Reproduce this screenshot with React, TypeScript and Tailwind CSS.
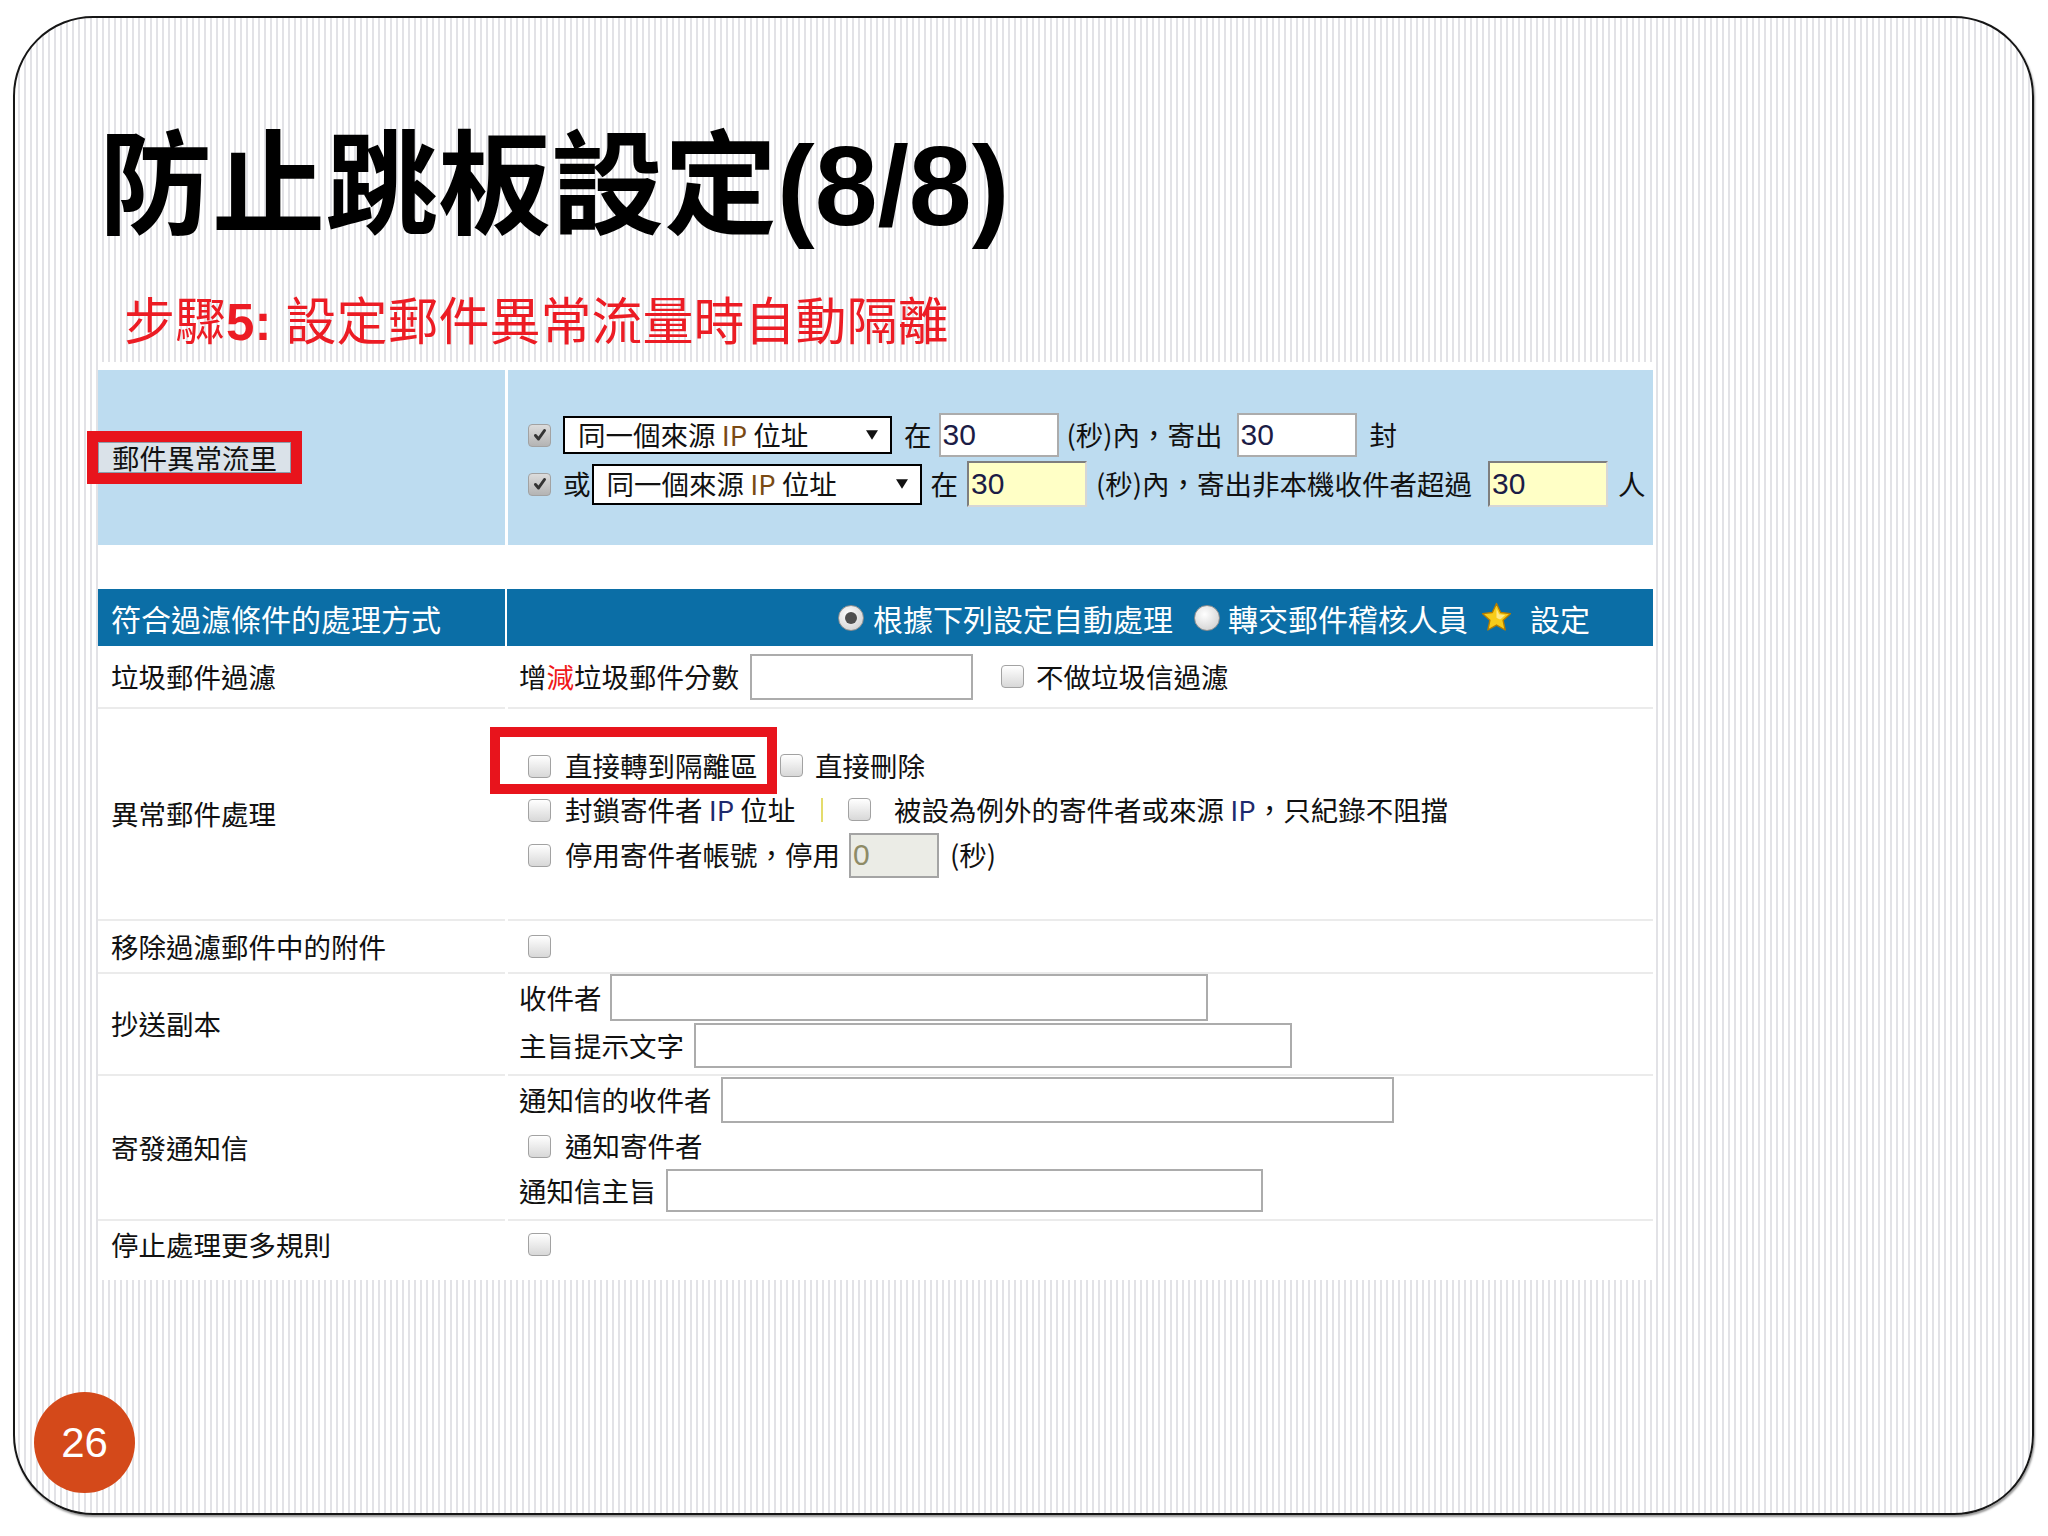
import type { ReactNode } from "react";

// Slide 26: anti-relay settings, step 5 (screenshot of the mail-filter form)

const formFont = "font-['Noto_Sans_CJK_TC','Noto_Sans_CJK_JP',sans-serif]";

function Check({ on = false }: { on?: boolean }) {
  return (
    <span
      className={
        "inline-flex h-[23px] w-[23px] shrink-0 items-center justify-center rounded-[4px] border border-[#a2a2a2] bg-linear-to-b " +
        (on ? "from-[#dcdcdc] to-[#b4b4b4]" : "from-[#ffffff] to-[#d8d8d8]")
      }
    >
      {on && (
        <svg viewBox="0 0 16 16" className="h-[16px] w-[16px]">
          <path
            d="M3.5 8.5 6.5 12 12.5 3.5"
            fill="none"
            stroke="#333333"
            strokeWidth="3"
            strokeLinecap="round"
            strokeLinejoin="round"
          />
        </svg>
      )}
    </span>
  );
}

function Field({
  className = "",
  value = "",
  kind = "white",
}: {
  className?: string;
  value?: string;
  kind?: "white" | "yellow" | "off";
}) {
  const skin =
    kind === "yellow"
      ? "border-2 border-t-[#7e7e7e] border-l-[#7e7e7e] border-r-[#d6d6d6] border-b-[#d6d6d6] bg-[#ffffc6] text-[#1c1c46]"
      : kind === "off"
        ? "border-2 border-[#a4a4a4] bg-[#ebece6] text-[#8e8b66]"
        : "border-2 border-[#acacac] bg-white text-[#1c1c46]";
  return (
    <span
      className={`flex shrink-0 items-center pl-[2px] font-['Liberation_Sans',sans-serif] text-[30px] leading-none ${skin} ${className}`}
    >
      {value}
    </span>
  );
}

function Select({ className = "" }: { className?: string }) {
  return (
    <span
      className={`flex shrink-0 items-center justify-between border-2 border-black bg-white pl-[13px] pr-[12px] ${className}`}
    >
      <span className="whitespace-nowrap">
        同一個來源 <span className="text-[#7a4a14]">IP</span> 位址
      </span>
      <svg viewBox="0 0 10 10" className="h-[12px] w-[12px]">
        <path d="M0 1h10L5 9z" fill="#111" />
      </svg>
    </span>
  );
}

function Radio({ on = false }: { on?: boolean }) {
  return (
    <span className="flex h-[26px] w-[26px] shrink-0 items-center justify-center rounded-full border border-[#8f8f8f] bg-[radial-gradient(circle_at_40%_35%,#ffffff,#c9c9c9)]">
      {on && <span className="h-[12px] w-[12px] rounded-full bg-[#4f4f4f]" />}
    </span>
  );
}

function Star() {
  return (
    <svg viewBox="0 0 24 24" className="h-[33px] w-[33px] shrink-0">
      <path
        d="M12 1.8l3 6.6 7.1.8-5.3 4.8 1.5 7.1L12 17.5 5.7 21.1l1.5-7.1L1.9 9.2 9 8.4z"
        fill="#f8cc1a"
        stroke="#b57d00"
        strokeWidth="1"
        strokeLinejoin="round"
      />
      <path d="M12 5.5l1.9 4.2 4.4.5-3.3 3-1 .1-2-1.2z" fill="#fde98a" />
    </svg>
  );
}

function Row({
  left,
  children,
  className = "",
  rightClass = "",
}: {
  left: ReactNode;
  children?: ReactNode;
  className?: string;
  rightClass?: string;
}) {
  return (
    <div className={`flex gap-[3px] ${className}`}>
      <div className="flex w-[407px] shrink-0 items-center border-b-2 border-[#ebebeb] pl-[13px]">
        {left}
      </div>
      <div className={`relative flex flex-1 border-b-2 border-[#ebebeb] pl-[11px] ${rightClass}`}>
        {children}
      </div>
    </div>
  );
}

function MailForm() {
  return (
    <div
      className={`ml-[83px] mt-[13px] w-[1557px] bg-white pr-[2px] pt-[8px] text-[27.5px] leading-none text-[#111] ${formFont}`}
    >
      {/* abnormal traffic trigger */}
      <div className="flex h-[175px] gap-[3px]">
        <div className="flex w-[407px] shrink-0 items-center bg-[#bddcf0]">
          <span className="flex h-[31px] items-center border border-[#8d9dab] bg-[#dae2e9] px-[13px] ring-[11px] ring-[#e8141c]">
            郵件異常流里
          </span>
        </div>
        <div className="flex flex-1 flex-col justify-center gap-[4px] bg-[#bddcf0] pl-[20px] pt-[5px]">
          <div className="flex h-[44px] items-center">
            <Check on />
            <Select className="ml-[12px] h-[38px] w-[329px]" />
            <span className="ml-[12px]">在</span>
            <Field className="ml-[7px] h-[44px] w-[120px]" value="30" />
            <span className="ml-[8px] w-[162px] whitespace-nowrap">(秒)內，寄出</span>
            <Field className="ml-[8px] h-[44px] w-[120px]" value="30" />
            <span className="ml-[13px]">封</span>
          </div>
          <div className="flex h-[46px] items-center">
            <Check on />
            <span className="ml-[12px]">或</span>
            <Select className="ml-[1px] h-[41px] w-[330px]" />
            <span className="ml-[9px]">在</span>
            <Field className="ml-[9px] h-[46px] w-[120px]" value="30" kind="yellow" />
            <span className="ml-[9px] w-[383px] whitespace-nowrap">(秒)內，寄出非本機收件者超過</span>
            <Field className="ml-[9px] h-[46px] w-[120px]" value="30" kind="yellow" />
            <span className="ml-[10px]">人</span>
          </div>
        </div>
      </div>

      {/* header */}
      <div className="mt-[44px] flex h-[57px] gap-[2px] text-[30px] text-white">
        <div className="flex w-[407px] shrink-0 items-center bg-[#0b6ea6] pl-[13px]">
          符合過濾條件的處理方式
        </div>
        <div className="flex flex-1 items-center bg-[#0b6ea6] pl-[331px]">
          <Radio on />
          <span className="ml-[9px]">根據下列設定自動處理</span>
          <span className="ml-[21px]">
            <Radio />
          </span>
          <span className="ml-[8px]">轉交郵件稽核人員</span>
          <span className="ml-[12px]">
            <Star />
          </span>
          <span className="ml-[17px]">設定</span>
        </div>
      </div>

      <Row left="垃圾郵件過濾" className="h-[63px]" rightClass="items-center">
        <span className="w-[222px] whitespace-nowrap">
          增<span className="text-[#f01818]">減</span>垃圾郵件分數
        </span>
        <Field className="ml-[9px] h-[46px] w-[223px]" />
        <span className="ml-[28px]">
          <Check />
        </span>
        <span className="ml-[12px]">不做垃圾信過濾</span>
      </Row>

      <Row left="異常郵件處理" className="h-[212px]" rightClass="flex-col pt-[35px]">
        <div className="pointer-events-none absolute left-[-18px] top-[18px] h-[67px] w-[287px] border-[10px] border-[#e8141c]" />
        <div className="flex h-[44px] items-center pl-[9px]">
          <Check />
          <span className="ml-[14px] w-[193px] whitespace-nowrap">直接轉到隔離區</span>
          <span className="ml-[22px]">
            <Check />
          </span>
          <span className="ml-[12px]">直接刪除</span>
        </div>
        <div className="flex h-[44px] items-center pl-[9px]">
          <Check />
          <span className="ml-[14px] w-[234px] whitespace-nowrap">
            封鎖寄件者 <span className="text-[#1e2a6e]">IP</span> 位址
          </span>
          <span className="ml-[22px] h-[24px] w-[2px] bg-[#e4dc6c]" />
          <span className="ml-[25px]">
            <Check />
          </span>
          <span className="ml-[23px] whitespace-nowrap">
            被設為例外的寄件者或來源 <span className="text-[#1e2a6e]">IP</span>，只紀錄不阻擋
          </span>
        </div>
        <div className="flex h-[46px] items-center pl-[9px]">
          <Check />
          <span className="ml-[14px] w-[274px] whitespace-nowrap">停用寄件者帳號，停用</span>
          <Field className="ml-[10px] h-[45px] w-[90px]" value="0" kind="off" />
          <span className="ml-[11px]">(秒)</span>
        </div>
      </Row>

      <Row left="移除過濾郵件中的附件" className="h-[53px]" rightClass="items-center pl-[20px]">
        <Check />
      </Row>

      <Row left="抄送副本" className="h-[102px]" rightClass="flex-col">
        <div className="flex h-[47px] items-center">
          <span className="w-[82px] whitespace-nowrap">收件者</span>
          <Field className="ml-[9px] h-[47px] w-[598px]" />
        </div>
        <div className="mt-[2px] flex h-[45px] items-center">
          <span className="w-[165px] whitespace-nowrap">主旨提示文字</span>
          <Field className="ml-[10px] h-[45px] w-[598px]" />
        </div>
      </Row>

      <Row left="寄發通知信" className="h-[145px]" rightClass="flex-col pt-[1px]">
        <div className="flex h-[46px] items-center">
          <span className="w-[193px] whitespace-nowrap">通知信的收件者</span>
          <Field className="ml-[9px] h-[46px] w-[673px]" />
        </div>
        <div className="flex h-[46px] items-center pl-[9px]">
          <Check />
          <span className="ml-[14px]">通知寄件者</span>
        </div>
        <div className="flex h-[43px] items-center">
          <span className="w-[137px] whitespace-nowrap">通知信主旨</span>
          <Field className="ml-[10px] h-[43px] w-[597px]" />
        </div>
      </Row>

      <div className="flex h-[59px] gap-[3px] pb-[12px]">
        <div className="flex w-[407px] shrink-0 items-center pl-[13px]">停止處理更多規則</div>
        <div className="flex flex-1 items-center pl-[20px]">
          <Check />
        </div>
      </div>
    </div>
  );
}

export default function App() {
  return (
    <div className="h-[1536px] w-[2048px] overflow-hidden bg-white pl-[13px] pt-[16px]">
      <div className="relative h-[1499px] w-[2021px] rounded-[80px] border-2 border-[#161616] bg-[image:repeating-linear-gradient(90deg,#ffffff_0px,#ffffff_3px,#e2e2e6_3px,#e2e2e6_5px,#ffffff_5px,#ffffff_6px)] shadow-[1px_2px_2px_rgba(0,0,0,0.4)]">
        <h1 className="pl-[84px] pt-[112px] font-['Liberation_Sans','Noto_Sans_CJK_TC',sans-serif] text-[113px] font-bold leading-[113px] text-black">
          防止跳板設定(8/8)
        </h1>
        <h2 className="mt-[54px] pl-[109px] font-['Liberation_Sans','Noto_Sans_CJK_TC',sans-serif] text-[51px] leading-[52px] text-[#ec1c24]">
          步驟<span className="font-bold">5:</span> 設定郵件異常流量時自動隔離
        </h2>
        <MailForm />
        <div className="absolute left-[19px] top-[1374px] flex h-[101px] w-[101px] items-center justify-center rounded-full bg-[#d4491a] font-['Liberation_Sans',sans-serif] text-[42px] text-white">
          26
        </div>
      </div>
    </div>
  );
}
